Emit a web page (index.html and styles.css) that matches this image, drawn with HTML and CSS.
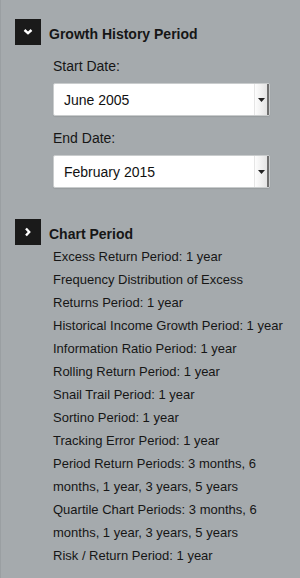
FILE: index.html
```html
<!DOCTYPE html>
<html>
<head>
<meta charset="utf-8">
<link rel="stylesheet" href="styles.css">
</head>
<body>
<div class="panel">
  <section class="group">
    <div class="group-head">
      <span class="toggle"><svg width="10" height="8" viewBox="0 0 10 8"><path d="M1.5 2 L5 5.2 L8.5 2" fill="none" stroke="#fff" stroke-width="2.4"/></svg></span>
      <span class="group-title">Growth History Period</span>
    </div>
    <div class="group-body">
      <label class="field-label">Start Date:</label>
      <div class="select"><span class="select-value">June 2005</span><span class="select-btn"><svg width="7" height="4" viewBox="0 0 7 4"><path d="M0 0 H7 L3.5 4 Z" fill="#222"/></svg></span></div>
      <label class="field-label">End Date:</label>
      <div class="select"><span class="select-value">February 2015</span><span class="select-btn"><svg width="7" height="4" viewBox="0 0 7 4"><path d="M0 0 H7 L3.5 4 Z" fill="#222"/></svg></span></div>
    </div>
  </section>
  <section class="group group-chart">
    <div class="group-head">
      <span class="toggle"><svg width="8" height="10" viewBox="0 0 8 10"><path d="M2 1.5 L5.2 5 L2 8.5" fill="none" stroke="#fff" stroke-width="2.4"/></svg></span>
      <span class="group-title">Chart Period</span>
    </div>
    <ul class="period-list">
      <li>Excess Return Period: 1 year</li>
      <li>Frequency Distribution of Excess Returns Period: 1 year</li>
      <li>Historical Income Growth Period: 1 year</li>
      <li>Information Ratio Period: 1 year</li>
      <li>Rolling Return Period: 1 year</li>
      <li>Snail Trail Period: 1 year</li>
      <li>Sortino Period: 1 year</li>
      <li>Tracking Error Period: 1 year</li>
      <li>Period Return Periods: 3 months, 6 months, 1 year, 3 years, 5 years</li>
      <li>Quartile Chart Periods: 3 months, 6 months, 1 year, 3 years, 5 years</li>
      <li>Risk / Return Period: 1 year</li>
    </ul>
  </section>
</div>
</body>
</html>
```
FILE: styles.css
```css
html, body {
  margin: 0;
  padding: 0;
}
body {
  background: #a5aaad;
  font-family: "Liberation Sans", Arial, sans-serif;
  color: #161616;
  width: 300px;
  height: 578px;
  overflow: hidden;
}
.panel {
  box-sizing: border-box;
  height: 578px;
  border-left: 1px solid #9a9fa2;
  padding: 19px 0 0 14px;
}
.group-head {
  display: flex;
  align-items: center;
  height: 26px;
}
.toggle {
  width: 26px;
  height: 26px;
  background: #1a1a1a;
  display: flex;
  align-items: center;
  justify-content: center;
  flex: none;
}
.group-title {
  font-weight: bold;
  font-size: 14px;
  margin-left: 8px;
  margin-top: 4px;
}
.group-body {
  padding-left: 38px;
  display: flex;
  flex-direction: column;
}
.field-label {
  font-size: 14px;
  margin-top: 13px;
  height: 17px;
  line-height: 17px;
}
.select {
  margin-top: 8px;
  width: 217px;
  height: 33px;
  box-sizing: border-box;
  background: #fff;
  border: 1px solid #c9cccd;
  border-radius: 2px;
  display: flex;
  align-items: center;
  box-shadow: 0 1px 1px rgba(0,0,0,0.08);
}
.select + .field-label {
  margin-top: 14px;
}
.select-value {
  flex: 1;
  font-size: 14px;
  padding-left: 10px;
  padding-top: 1px;
  color: #111;
}
.select-btn {
  width: 15px;
  height: 31px;
  box-sizing: border-box;
  background: linear-gradient(to right, #fdfdfd, #e4e4e4);
  border-left: 1px solid #e6e6e6;
  border-right: 2px solid #6f6f6f;
  display: flex;
  align-items: center;
  justify-content: center;
}
.group-chart {
  margin-top: 31px;
}
.period-list {
  list-style: none;
  margin: 0;
  padding: 0 0 0 38px;
  width: 236px;
  font-size: 13px;
  line-height: 23px;
}
```
